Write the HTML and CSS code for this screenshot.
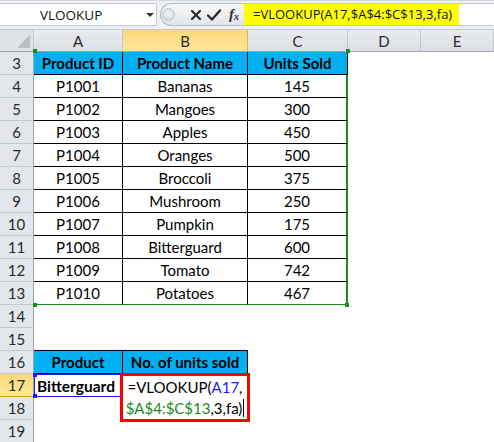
FILE: index.html
```html
<!DOCTYPE html>
<html>
<head>
<meta charset="utf-8">
<link rel="stylesheet" href="styles.css">
</head>
<body>
<div class="fbar">
  <div class="namebox"><span class="nb-text">VLOOKUP</span><span class="nb-arrow"></span></div>
  <div class="pill">
    <span class="dot"></span>
    <svg class="ic ic-x" width="14" height="14" viewBox="0 0 14 14"><path d="M3 3 L11 11 M11 3 L3 11" stroke="#2b2b2b" stroke-width="2.2" stroke-linecap="round"/></svg>
    <svg class="ic" width="16" height="14" viewBox="0 0 16 14"><path d="M2 7.5 L6 11.5 L14 2.5" stroke="#2b2b2b" stroke-width="2.4" fill="none" stroke-linecap="round" stroke-linejoin="round"/></svg>
    <span class="fx">f<sub>x</sub></span>
  </div>
  <div class="finput"><span class="fhl">=VLOOKUP(A17,$A$4:$C$13,3,fa)</span></div>
</div>
<div class="sheet">
  <div class="ch corner"><span class="tri"></span></div>
  <div class="ch">A</div>
  <div class="ch sel">B</div>
  <div class="ch">C</div>
  <div class="ch">D</div>
  <div class="ch">E</div>

  <div class="rh">3</div>
  <div class="c k hd"><span class="sq g tl"></span>Product ID</div>
  <div class="c k hd">Product Name</div>
  <div class="c k hd"><span class="sq g tr"></span>Units Sold</div>
  <div class="c"></div><div class="c"></div>

  <div class="rh">4</div><div class="c k">P1001</div><div class="c k">Bananas</div><div class="c k gr">145</div><div class="c"></div><div class="c"></div>
  <div class="rh">5</div><div class="c k">P1002</div><div class="c k">Mangoes</div><div class="c k gr">300</div><div class="c"></div><div class="c"></div>
  <div class="rh">6</div><div class="c k">P1003</div><div class="c k">Apples</div><div class="c k gr">450</div><div class="c"></div><div class="c"></div>
  <div class="rh">7</div><div class="c k">P1004</div><div class="c k">Oranges</div><div class="c k gr">500</div><div class="c"></div><div class="c"></div>
  <div class="rh">8</div><div class="c k">P1005</div><div class="c k">Broccoli</div><div class="c k gr">375</div><div class="c"></div><div class="c"></div>
  <div class="rh">9</div><div class="c k">P1006</div><div class="c k">Mushroom</div><div class="c k gr">250</div><div class="c"></div><div class="c"></div>
  <div class="rh">10</div><div class="c k">P1007</div><div class="c k">Pumpkin</div><div class="c k gr">175</div><div class="c"></div><div class="c"></div>
  <div class="rh">11</div><div class="c k">P1008</div><div class="c k">Bitterguard</div><div class="c k gr">600</div><div class="c"></div><div class="c"></div>
  <div class="rh">12</div><div class="c k">P1009</div><div class="c k">Tomato</div><div class="c k gr">742</div><div class="c"></div><div class="c"></div>
  <div class="rh">13</div><div class="c k gb"><span class="sq g bl"></span>P1010</div><div class="c k gb">Potatoes</div><div class="c k gr gb"><span class="sq g br"></span>467</div><div class="c"></div><div class="c"></div>

  <div class="rh">14</div><div class="c"></div><div class="c"></div><div class="c"></div><div class="c"></div><div class="c"></div>
  <div class="rh">15</div><div class="c kb"></div><div class="c kb"></div><div class="c"></div><div class="c"></div><div class="c"></div>

  <div class="rh">16</div><div class="c k hd">Product</div><div class="c k hd">No. of units sold</div><div class="c"></div><div class="c"></div><div class="c"></div>
  <div class="rh sel">17</div>
  <div class="c bh"><span class="sq b tl"></span><span class="sq b tr"></span><span class="sq b bl"></span><span class="sq b br"></span>Bitterguard</div>
  <div class="c edit-host"><div class="edit">=VLOOKUP(<span class="ref-b">A17</span>,<br><span class="ref-g">$A$4:$C$13</span>,3,fa)<span class="caret"></span></div></div>
  <div class="c"></div><div class="c"></div><div class="c"></div>
  <div class="rh">18</div><div class="c"></div><div class="c"></div><div class="c"></div><div class="c"></div><div class="c"></div>
  <div class="rh">19</div><div class="c"></div><div class="c"></div><div class="c"></div><div class="c"></div><div class="c"></div>
</div>
</body>
</html>
```

FILE: styles.css
```css
html, body {
  margin: 0;
  padding: 0;
  background: #ffffff;
  overflow: hidden;
}
body {
  width: 494px;
  height: 442px;
  font-family: Lato, "Liberation Sans", sans-serif;
}

/* formula bar */
.fbar {
  height: 30px;
  box-sizing: border-box;
  background: #eef0f3;
  border-top: 1px solid #d3d7dd;
  border-bottom: 1px solid #c3c8cf;
  padding-top: 2px;
  display: flex;
  align-items: flex-start;
}
.namebox {
  width: 157px;
  height: 23px;
  box-sizing: border-box;
  background: #fff;
  border: 1px solid #c5cad1;
  border-left: none;
  display: flex;
  align-items: center;
  position: relative;
}
.nb-text {
  font-family: "Open Sans", "Liberation Sans", sans-serif;
  font-size: 13.5px;
  color: #111;
  margin-left: 40px;
}
.nb-arrow {
  position: absolute;
  left: 146px;
  top: 9px;
  width: 0;
  height: 0;
  border-left: 4px solid transparent;
  border-right: 4px solid transparent;
  border-top: 4px solid #333;
}
.pill {
  margin-left: 3px;
  width: 84px;
  height: 23px;
  box-sizing: border-box;
  border: 1px solid #b8bec6;
  border-right: none;
  border-radius: 12px 0 0 12px;
  background: linear-gradient(#f7f8f9, #e2e5e9);
  display: flex;
  align-items: center;
  padding-left: 1px;
}
.dot {
  width: 13px;
  height: 13px;
  border-radius: 50%;
  box-sizing: border-box;
  border: 1px solid #c3c7cc;
  background: radial-gradient(circle at 50% 45%, #f4f5f6 0, #dcdfe3 60%, #cfd3d8 100%);
  margin-right: 14px;
}
.ic {
  display: block;
  margin-right: 6px;
}
.ic-x {
  margin-right: 3px;
}
.fx {
  font-family: "Liberation Serif", serif;
  font-style: italic;
  font-weight: bold;
  font-size: 15px;
  color: #333;
  line-height: 1;
  margin-left: 1px;
}
.fx sub {
  font-size: 10px;
  vertical-align: -1px;
}
.finput {
  flex: 1;
  height: 23px;
  box-sizing: border-box;
  background: #fff;
  border-top: 1px solid #c5cad1;
  border-bottom: 1px solid #c5cad1;
  display: flex;
}
.fhl {
  background: #ffff00;
  width: 215px;
  height: 100%;
  box-sizing: border-box;
  padding-left: 9px;
  font-family: "Open Sans", "Liberation Sans", sans-serif;
  font-size: 13px;
  line-height: 21px;
  color: #111;
  white-space: nowrap;
}

/* sheet grid */
.sheet {
  display: grid;
  grid-template-columns: 34px 89px 125px 100px 73px 73px;
  grid-template-rows: 22px;
  grid-auto-rows: 23px;
  font-size: 15px;
  color: #000;
}
.ch {
  background: linear-gradient(#e9ebee, #dcdfe4);
  border-right: 1px solid #c4c8ce;
  border-bottom: 1px solid #9ea4ac;
  box-sizing: border-box;
  display: flex;
  align-items: center;
  justify-content: center;
  color: #2a2a2a;
  font-size: 15px;
}
.ch.sel {
  background: linear-gradient(#f9d977, #ffe69c);
  border-right: 1px solid #f0b04c;
  border-bottom: 1px solid #e69b2b;
}
.corner {
  position: relative;
  background: #dfe2e7;
}
.tri {
  position: absolute;
  right: 3px;
  bottom: 3px;
  width: 0;
  height: 0;
  border-left: 13px solid transparent;
  border-bottom: 13px solid #b9bdc4;
}
.rh {
  background: #e3e6ea;
  border-right: 1px solid #9ea4ac;
  border-bottom: 1px solid #c4c8ce;
  box-sizing: border-box;
  display: flex;
  align-items: center;
  justify-content: center;
  color: #2a2a2a;
  font-size: 15px;
}
.rh.sel {
  background: linear-gradient(#f9d977, #ffe69c);
  border-bottom: 1px solid #e69b2b;
}
.c {
  box-sizing: border-box;
  display: flex;
  align-items: center;
  justify-content: center;
  white-space: nowrap;
  position: relative;
}
.k {
  border-right: 1px solid #000;
  border-bottom: 1px solid #000;
}
.kb {
  border-bottom: 1px solid #000;
}
.hd {
  background: #00b0f0;
  font-weight: bold;
}
.gr {
  border-right: 2px solid #1d8a1d;
}
.gb {
  border-bottom: 1px solid #1d8a1d;
}
.bh {
  font-weight: bold;
  font-size: 15.5px;
  border: 1px solid #1a1aff;
  justify-content: flex-start;
  padding-left: 2px;
  overflow: visible;
}
.sq {
  position: absolute;
  width: 4px;
  height: 4px;
}
.sq.g { background: #1d8a1d; }
.sq.b { background: #1a1aff; }
.sq.tl { left: -1px; top: -3px; }
.sq.tr { right: -3px; top: -3px; }
.sq.bl { left: -1px; bottom: -3px; }
.sq.br { right: -3px; bottom: -3px; }
.bh .sq.tl { left: -2px; top: -2px; }
.bh .sq.tr { right: -2px; top: -2px; }
.bh .sq.bl { left: -2px; bottom: -2px; }
.bh .sq.br { right: -2px; bottom: -2px; }

.edit-host {
  overflow: visible;
  z-index: 2;
}
.edit {
  position: absolute;
  left: -3px;
  top: -1px;
  width: 130px;
  height: 49px;
  box-sizing: border-box;
  border: 3px solid #ff0000;
  background: #fff;
  text-align: center;
  font-size: 15px;
  line-height: 21px;
  padding-top: 1px;
  white-space: nowrap;
  color: #000;
}
.ref-b { color: #2020ff; }
.ref-g { color: #1d8a1d; }
.caret {
  display: inline-block;
  width: 1px;
  height: 18px;
  background: #000;
  vertical-align: -3px;
  margin-left: 1px;
}
```
